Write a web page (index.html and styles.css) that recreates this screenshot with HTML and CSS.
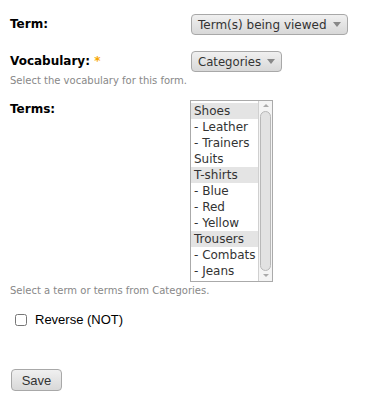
FILE: index.html
```html
<!DOCTYPE html>
<html>
<head>
    <title>Term filter</title>
    <link rel="stylesheet" href="styles.css">
</head>
<body>
    <form class="filter-form">
        <div class="form-item">
            <label class="form-label">Term:</label>
            <div class="select-box wide">Term(s) being viewed <span class="arrow"></span></div>
        </div>

        <div class="form-item">
            <label class="form-label">Vocabulary: <span class="required">*</span></label>
            <div class="select-box">Categories <span class="arrow"></span></div>
        </div>
        <div class="description">Select the vocabulary for this form.</div>

        <div class="form-item terms-item">
            <label class="form-label">Terms:</label>
            <div class="listbox">
                <div class="options">
                    <div class="option group">Shoes</div>
                    <div class="option">- Leather</div>
                    <div class="option">- Trainers</div>
                    <div class="option">Suits</div>
                    <div class="option group">T-shirts</div>
                    <div class="option">- Blue</div>
                    <div class="option">- Red</div>
                    <div class="option">- Yellow</div>
                    <div class="option group">Trousers</div>
                    <div class="option">- Combats</div>
                    <div class="option">- Jeans</div>
                </div>
                <div class="scrollbar">
                    <div class="scroll-btn up"></div>
                    <div class="thumb"></div>
                    <div class="scroll-btn down"></div>
                </div>
            </div>
        </div>
        <div class="description">Select a term or terms from Categories.</div>

        <label class="checkbox-row">
            <input type="checkbox"> Reverse (NOT)
        </label>

        <button type="button" class="save-btn">Save</button>
    </form>
</body>
</html>
```

FILE: styles.css
```css
body {
    margin: 0;
    background: white;
    font-family: "DejaVu Sans", Verdana, sans-serif;
    color: #222;
}
.filter-form {
    padding: 14px 10px;
}
.form-item {
    display: flex;
    align-items: flex-start;
}
.form-label {
    width: 181px;
    font-weight: bold;
    font-size: 12px;
    color: #000;
    padding-top: 3px;
}
.required {
    color: #f7a600;
}
.select-box {
    display: flex;
    align-items: center;
    height: 19px;
    padding: 0 6px 0 6px;
    border: 1px solid #a8a8a8;
    border-radius: 4px;
    background: linear-gradient(#f0f0f0, #d8d8d8);
    font-size: 11.7px;
    color: #333;
}
.select-box.wide {
    font-size: 12px;
}
.select-box .arrow {
    margin-left: 6px;
    border-left: 4px solid transparent;
    border-right: 4px solid transparent;
    border-top: 5px solid #888;
}
.form-item + .form-item {
    margin-top: 16px;
}
.description {
    font-size: 10px;
    color: #888;
    margin-top: 3px;
}
.terms-item {
    margin-top: 14px;
}
.terms-item .form-label {
    width: 180px;
    padding-top: 2px;
}
.listbox {
    display: flex;
    width: 81px;
    border: 1px solid #aaa;
    background: white;
}
.options {
    flex: 1;
    padding: 2px 0;
}
.option {
    height: 16px;
    line-height: 16px;
    font-size: 12px;
    color: #333;
    padding-left: 3px;
}
.option.group {
    background: #e4e4e4;
}
.scrollbar {
    width: 13px;
    display: flex;
    flex-direction: column;
    border-left: 1px solid #d0d0d0;
    background: #f4f4f4;
}
.scroll-btn {
    height: 10px;
    position: relative;
}
.scroll-btn::after {
    content: "";
    position: absolute;
    left: 4px;
    top: 3px;
    border-left: 3px solid transparent;
    border-right: 3px solid transparent;
}
.scroll-btn.up::after {
    border-bottom: 3px solid #aaa;
}
.scroll-btn.down::after {
    border-top: 3px solid #aaa;
}
.thumb {
    flex: 1;
    margin: 0 1px;
    border: 1px solid #b8b8b8;
    border-radius: 6px;
    background: #e2e2e2;
}
.checkbox-row {
    display: flex;
    align-items: center;
    gap: 8px;
    margin-top: 16px;
    padding-left: 5px;
    font-family: "Liberation Sans", Arial, sans-serif;
    font-size: 13px;
    color: #000;
}
.checkbox-row input {
    width: 12px;
    height: 12px;
    margin: 0;
}
.save-btn {
    display: block;
    margin-top: 42px;
    margin-left: 1px;
    width: 51px;
    height: 22px;
    border: 1px solid #a8a8a8;
    border-radius: 4px;
    background: linear-gradient(#f0f0f0, #d8d8d8);
    font-family: "Liberation Sans", Arial, sans-serif;
    font-size: 13px;
    color: #333;
}
```
